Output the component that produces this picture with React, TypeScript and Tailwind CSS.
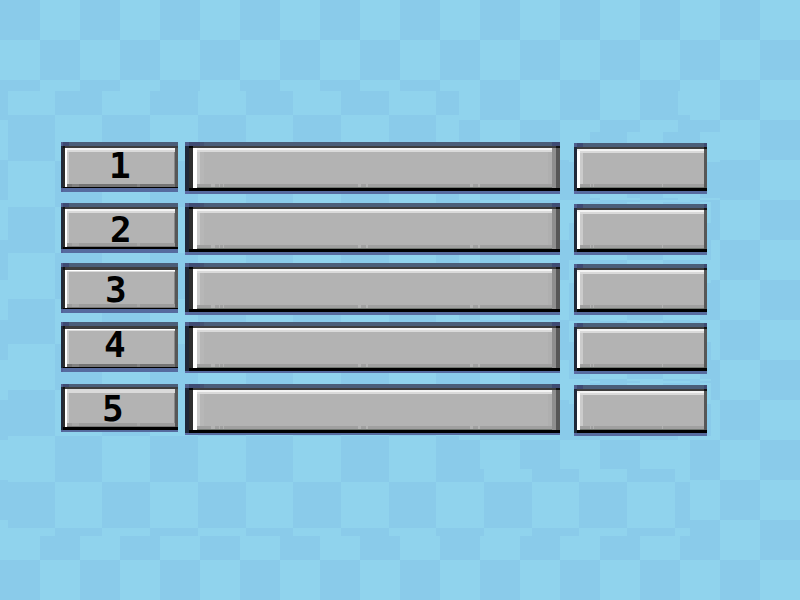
import React from "react";

const LIGHT = "#90d3ed";
const DARK = "#8acbea";

type Checker = { x: number; y: number; w: number; h: number; cw: number; ch: number; ox: number; oy: number };

// Patches of checkerboard; ox / oy is the corner of a dark cell.
const patches: Checker[] = [
  { x: 0, y: 0, w: 800, h: 600, cw: 40, ch: 40, ox: 0, oy: 0 },
  { x: 8, y: 91, w: 451, h: 445, cw: 47.7, ch: 45.89, ox: 54.7, oy: 69.1 },
  { x: 459, y: 469, w: 231, h: 67, cw: 47.7, ch: 45.89, ox: 54.7, oy: 69.1 },
  { x: 678, y: 91, w: 12, h: 445, cw: 47.7, ch: 45.89, ox: 54.7, oy: 69.1 },
  { x: 569, y: 132, w: 151, h: 66, cw: 36.67, ch: 37, ox: 590, oy: 125 },
  { x: 569, y: 202, w: 142, h: 58, cw: 36.67, ch: 37, ox: 590, oy: 186 },
  { x: 569, y: 260, w: 142, h: 60, cw: 36.67, ch: 37, ox: 590, oy: 246 },
  { x: 569, y: 321, w: 142, h: 60, cw: 36.67, ch: 37, ox: 590, oy: 305 },
  { x: 569, y: 383, w: 142, h: 53, cw: 36.67, ch: 37, ox: 590, oy: 367 },
];

function Backdrop() {
  return (
    <svg className="absolute inset-0" width="800" height="600" shapeRendering="crispEdges" aria-hidden="true">
      {patches.map((p, k) => {
        const cells: React.ReactNode[] = [];
        const c0 = Math.floor((p.x - p.ox) / p.cw);
        const c1 = Math.ceil((p.x + p.w - p.ox) / p.cw);
        const r0 = Math.floor((p.y - p.oy) / p.ch);
        const r1 = Math.ceil((p.y + p.h - p.oy) / p.ch);
        for (let r = r0; r < r1; r++) {
          for (let c = c0; c < c1; c++) {
            if ((r + c) % 2 !== 0) continue;
            const left = Math.max(p.x, Math.round(p.ox + c * p.cw));
            const top = Math.max(p.y, Math.round(p.oy + r * p.ch));
            const right = Math.min(p.x + p.w, Math.round(p.ox + (c + 1) * p.cw));
            const bottom = Math.min(p.y + p.h, Math.round(p.oy + (r + 1) * p.ch));
            if (right > left && bottom > top) {
              cells.push(<rect key={`${r},${c}`} x={left} y={top} width={right - left} height={bottom - top} fill={DARK} />);
            }
          }
        }
        return (
          <g key={k}>
            <rect x={p.x} y={p.y} width={p.w} height={p.h} fill={LIGHT} />
            {cells}
          </g>
        );
      })}
    </svg>
  );
}

function RankPlate({ digit, height, slate, dark, black, blue, className, shine, foot }: {
  digit: string; height: string; slate: string; dark: string; black: string; blue: string;
  className: string; shine: string; foot: string;
}) {
  return (
    <div className={`flex w-[117px] flex-col ${height}`}>
      <div className={`flex shrink-0 bg-[#4b5e79] ${slate}`}>
        <div className="w-0.5 bg-[#4f5e8c]" /><div className="w-1.5 bg-[#3f4b73]" />
      </div>
      <div className={`flex shrink-0 bg-[#3d3d3d] ${dark}`}>
        <div className="w-0.5 bg-[#1f2839]" /><div className="w-0.5 bg-[#111]" />
      </div>
      <div className="flex min-h-0 flex-1">
        <div className="w-0.5 bg-[#1f2839]" /><div className="w-0.5 bg-[#2d2d2d]" />
        <div className="w-0.5 bg-white" />
        <div className="relative flex flex-1 flex-col bg-[#b3b3b3]">
          <div className={`shrink-0 ${shine}`} />
          <div className="flex min-h-0 flex-1">
            <div className="w-0.5 bg-[#cbcbcb]" />
            <div className="flex-1" />
            <div className="w-px bg-[#888]" />
          </div>
          <div className={`flex shrink-0 ${foot}`}>
            <div className="w-[5px]" /><div className="w-[7px] bg-white/10" />
            <div className="w-[58px]" /><div className="w-[3px] bg-white/10" />
          </div>
          <span className={`absolute font-['DejaVu_Sans_Mono',monospace] text-[36px] leading-[36px] font-bold text-black ${className}`}>{digit}</span>
        </div>
        <div className="w-[3px] bg-[#575757]" />
      </div>
      <div className={`flex shrink-0 bg-black ${black}`}><div className="w-0.5 bg-[#1f2839]" /></div>
      <div className={`flex shrink-0 bg-[#566b9f] ${blue}`}><div className="w-0.5 bg-[#536199]" /></div>
    </div>
  );
}

function NamePlate({ height, blue }: { height: string; blue: string }) {
  return (
    <div className={`flex w-[375px] flex-col ${height}`}>
      <div className="flex h-1 shrink-0 bg-[#4b5e79]">
        <div className="w-1 bg-[#4f5e8c]" /><div className="w-[11px] bg-[#3f4b73]" /><div className="w-1 bg-[#455372]" />
        <div className="flex-1" /><div className="w-2 bg-[#3f4b73]" />
      </div>
      <div className="flex h-0.5 shrink-0 bg-[#3d3d3d]">
        <div className="w-1 bg-[#1f2839]" /><div className="w-1 bg-black" /><div className="flex-1" /><div className="w-1 bg-[#111]" />
      </div>
      <div className="flex min-h-0 flex-1">
        <div className="w-1 bg-[#1f2839]" /><div className="w-1 bg-[#2d2d2d]" /><div className="w-1 bg-white" />
        <div className="flex flex-1 flex-col bg-[#b3b3b3]">
          <div className="h-0.5 bg-[#f3f3f3]" /><div className="h-0.5 bg-[#dadada]" />
          <div className="flex min-h-0 flex-1">
            <div className="w-[3px] bg-[#cbcbcb]" /><div className="w-1 bg-[#b7b7b7]" /><div className="flex-1" /><div className="w-1 bg-[#afafaf]" />
          </div>
          <div className="flex h-[3px] bg-[#a0a0a0]">
            <div className="w-[14px]" /><div className="w-1 bg-[#b3b3b3]" /><div className="w-1" /><div className="w-px bg-[#b3b3b3]" /><div className="w-[3px]" /><div className="w-px bg-[#b3b3b3]" />
            <div className="w-[134px]" /><div className="w-[3px] bg-[#b3b3b3]" /><div className="w-[5px]" /><div className="w-0.5 bg-[#b3b3b3]" />
            <div className="w-[102px]" /><div className="w-[3px] bg-[#b3b3b3]" /><div className="w-[5px]" /><div className="w-0.5 bg-[#b3b3b3]" />
          </div>
          <div className="h-px bg-[#717671]" />
        </div>
        <div className="w-1 bg-[#8f8f8f]" /><div className="w-1 bg-[#575757]" />
      </div>
      <div className="flex h-[3px] shrink-0 bg-black"><div className="w-1 bg-[#1f2839]" /></div>
      <div className={`flex shrink-0 bg-[#566b9f] ${blue}`}><div className="w-1 bg-[#5b69a3]" /></div>
    </div>
  );
}

function ScorePlate() {
  return (
    <div className="mt-px flex h-[51px] w-[133px] flex-col">
      <div className="flex h-1 shrink-0 bg-[#4b5e79]">
        <div className="w-[3px] bg-[#4f5e8c]" /><div className="w-1.5 bg-[#3f4b73]" /><div className="flex-1" /><div className="w-[3px] bg-[#3f4b73]" />
      </div>
      <div className="flex h-0.5 shrink-0 bg-[#3d3d3d]">
        <div className="w-[3px] bg-[#1f2839]" /><div className="flex-1" /><div className="w-[3px] bg-[#111]" />
      </div>
      <div className="flex min-h-0 flex-1">
        <div className="w-[3px] bg-[#1f2839]" />
        <div className="flex flex-1 flex-col bg-[#b3b3b3]">
          <div className="h-0.5 bg-[#f3f3f3]" />
          <div className="flex h-0.5 bg-[#dadada]"><div className="w-[3px] bg-white" /></div>
          <div className="flex min-h-0 flex-1"><div className="w-[3px] bg-white" /><div className="w-[3px] bg-[#cbcbcb]" /></div>
          <div className="flex h-[3px] bg-[#a0a0a0]">
            <div className="w-[3px] bg-white" /><div className="w-[10px]" /><div className="w-px bg-[#b3b3b3]" /><div className="w-0.5" /><div className="w-px bg-[#b3b3b3]" />
            <div className="w-[68px]" /><div className="w-px bg-[#b3b3b3]" />
          </div>
          <div className="flex h-px bg-[#717671]"><div className="w-[3px] bg-white" /></div>
        </div>
        <div className="w-[3px] bg-[#575757]" />
      </div>
      <div className="flex h-[3px] shrink-0 bg-black"><div className="w-[3px] bg-[#1f2839]" /></div>
      <div className="flex h-[3px] shrink-0 bg-[#566b9f]"><div className="w-[3px] bg-[#5b69a3]" /></div>
    </div>
  );
}

const softShine = "h-1 border-t-2 border-[#f3f3f3] bg-[#dadada]";
const thinShine = "h-0.5 border-t border-white bg-[#dadada]";
const darkFoot = "h-[3px] bg-[#747474]";
const paleFoot = "h-1 border-b border-[#777] bg-[#9d9d9d]";

const rows = [
  { row: "h-[61px]", name: "h-[52px]", nameBlue: "h-[3px]", rank: { digit: "1", height: "h-[50px]", slate: "h-1", dark: "h-0.5", black: "h-px", blue: "h-1", shine: softShine, foot: darkFoot, className: "left-[42px] top-0" } },
  { row: "h-[60px]", name: "h-[52px]", nameBlue: "h-[3px]", rank: { digit: "2", height: "h-[50px]", slate: "h-1", dark: "h-0.5", black: "h-0.5", blue: "h-1", shine: softShine, foot: paleFoot, className: "left-[43px] top-[3px]" } },
  { row: "h-[59px]", name: "h-[52px]", nameBlue: "h-[3px]", rank: { digit: "3", height: "h-[50px]", slate: "h-1", dark: "h-[3px]", black: "h-px", blue: "h-1", shine: thinShine, foot: paleFoot, className: "left-[38px] top-[2px]" } },
  { row: "h-[62px]", name: "h-[51px]", nameBlue: "h-0.5", rank: { digit: "4", height: "h-[50px]", slate: "h-1", dark: "h-[3px]", black: "h-px", blue: "h-1", shine: thinShine, foot: darkFoot, className: "left-[37px] top-[-2px]" } },
  { row: "h-[52px]", name: "h-[51px]", nameBlue: "h-0.5", rank: { digit: "5", height: "h-12", slate: "h-[3px]", dark: "h-0.5", black: "h-[3px]", blue: "h-0.5", shine: "h-1 bg-[#dadada]", foot: paleFoot, className: "left-[35px] top-[2px]" } },
];

export default function App() {
  return (
    <main className="relative h-[600px] w-[800px] overflow-hidden bg-[#90d3ed]">
      <Backdrop />
      <div className="relative flex flex-col pt-[142px] pl-[61px]">
        {rows.map((r) => (
          <div key={r.rank.digit} className={`flex items-start ${r.row}`}>
            <RankPlate {...r.rank} />
            <div className="ml-[7px] mr-[14px]"><NamePlate height={r.name} blue={r.nameBlue} /></div>
            <ScorePlate />
          </div>
        ))}
      </div>
    </main>
  );
}
